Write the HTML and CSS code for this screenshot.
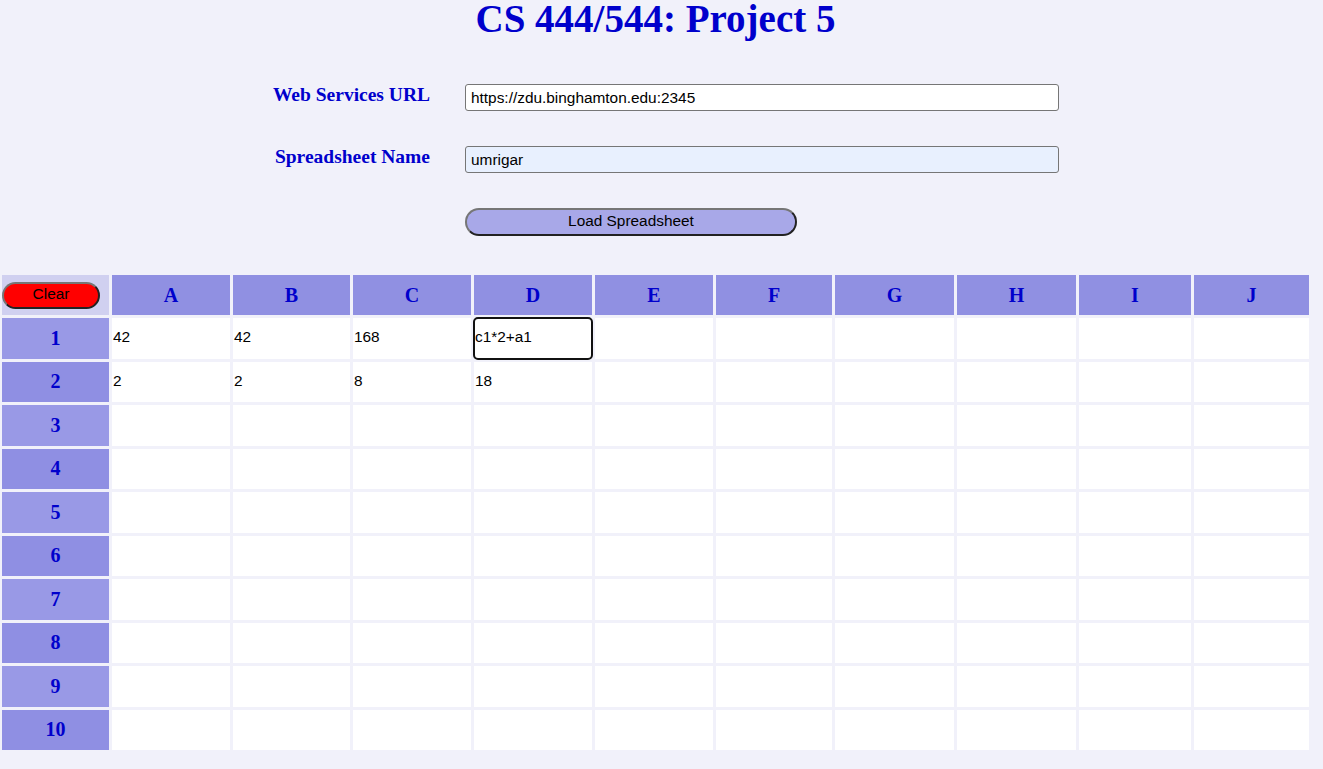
FILE: index.html
```html
<!DOCTYPE html>
<html lang="en">
<head>
<meta charset="utf-8">
<title>CS 444/544: Project 5</title>
<link rel="stylesheet" href="styles.css">
</head>
<body>
<div class="page">
  <h1 class="title">CS 444/544: Project 5</h1>
  <form class="form">
    <label class="label" for="url">Web Services URL</label>
    <input class="field" id="url" value="https://zdu.binghamton.edu:2345">
    <label class="label" for="name">Spreadsheet Name</label>
    <input class="field field-filled" id="name" value="umrigar">
    <span class="spacer"></span>
    <button type="button" class="load">Load Spreadsheet</button>
  </form>
  <div class="sheet">
    <div class="corner"><button type="button" class="clear">Clear</button></div>
    <div class="hdr">A</div><div class="hdr">B</div><div class="hdr">C</div><div class="hdr">D</div><div class="hdr">E</div>
    <div class="hdr">F</div><div class="hdr">G</div><div class="hdr">H</div><div class="hdr">I</div><div class="hdr">J</div>

    <div class="rowhdr odd">1</div>
    <div class="cell">42</div><div class="cell">42</div><div class="cell">168</div><div class="cell focused">c1*2+a1</div>
    <div class="cell"></div><div class="cell"></div><div class="cell"></div><div class="cell"></div><div class="cell"></div><div class="cell"></div>

    <div class="rowhdr even">2</div>
    <div class="cell">2</div><div class="cell">2</div><div class="cell">8</div><div class="cell">18</div>
    <div class="cell"></div><div class="cell"></div><div class="cell"></div><div class="cell"></div><div class="cell"></div><div class="cell"></div>

    <div class="rowhdr odd">3</div>
    <div class="cell"></div><div class="cell"></div><div class="cell"></div><div class="cell"></div><div class="cell"></div>
    <div class="cell"></div><div class="cell"></div><div class="cell"></div><div class="cell"></div><div class="cell"></div>

    <div class="rowhdr even">4</div>
    <div class="cell"></div><div class="cell"></div><div class="cell"></div><div class="cell"></div><div class="cell"></div>
    <div class="cell"></div><div class="cell"></div><div class="cell"></div><div class="cell"></div><div class="cell"></div>

    <div class="rowhdr odd">5</div>
    <div class="cell"></div><div class="cell"></div><div class="cell"></div><div class="cell"></div><div class="cell"></div>
    <div class="cell"></div><div class="cell"></div><div class="cell"></div><div class="cell"></div><div class="cell"></div>

    <div class="rowhdr even">6</div>
    <div class="cell"></div><div class="cell"></div><div class="cell"></div><div class="cell"></div><div class="cell"></div>
    <div class="cell"></div><div class="cell"></div><div class="cell"></div><div class="cell"></div><div class="cell"></div>

    <div class="rowhdr odd">7</div>
    <div class="cell"></div><div class="cell"></div><div class="cell"></div><div class="cell"></div><div class="cell"></div>
    <div class="cell"></div><div class="cell"></div><div class="cell"></div><div class="cell"></div><div class="cell"></div>

    <div class="rowhdr even">8</div>
    <div class="cell"></div><div class="cell"></div><div class="cell"></div><div class="cell"></div><div class="cell"></div>
    <div class="cell"></div><div class="cell"></div><div class="cell"></div><div class="cell"></div><div class="cell"></div>

    <div class="rowhdr odd">9</div>
    <div class="cell"></div><div class="cell"></div><div class="cell"></div><div class="cell"></div><div class="cell"></div>
    <div class="cell"></div><div class="cell"></div><div class="cell"></div><div class="cell"></div><div class="cell"></div>

    <div class="rowhdr even">10</div>
    <div class="cell"></div><div class="cell"></div><div class="cell"></div><div class="cell"></div><div class="cell"></div>
    <div class="cell"></div><div class="cell"></div><div class="cell"></div><div class="cell"></div><div class="cell"></div>
  </div>
</div>
</body>
</html>
```

FILE: styles.css
```css
html, body {
  margin: 0;
  padding: 0;
  background: #f1f1fa;
}

body {
  font-family: "Liberation Sans", Arial, sans-serif;
  color: #000;
}

.page {
  width: 1311px;
}

.title {
  margin: 0;
  font-family: "Liberation Serif", "Times New Roman", serif;
  font-weight: bold;
  font-size: 39px;
  line-height: 37px;
  color: #0000cc;
  text-align: center;
}

.form {
  display: grid;
  grid-template-columns: 430px 594px;
  grid-template-rows: 27px 27px 28px;
  column-gap: 35px;
  row-gap: 35px;
  margin: 47px 0 0 0;
}

.label {
  align-self: start;
  text-align: right;
  font-family: "Liberation Serif", "Times New Roman", serif;
  font-weight: bold;
  font-size: 19.5px;
  line-height: 22px;
  color: #0000cc;
}

.field {
  box-sizing: border-box;
  width: 594px;
  height: 27px;
  margin: 0;
  padding: 0 5px;
  border: 1px solid #767676;
  border-radius: 3px;
  background: #fff;
  font-family: "Liberation Sans", Arial, sans-serif;
  font-size: 15.4px;
  color: #000;
}

.field-filled {
  background: #e8f0fe;
}

.load {
  box-sizing: border-box;
  width: 332px;
  height: 28px;
  margin: 0;
  padding: 0 0 2px;
  border: 2px solid;
  border-color: #767676 #222 #222 #767676;
  border-radius: 14px;
  background: #a8a8e8;
  font-family: "Liberation Sans", Arial, sans-serif;
  font-size: 15.4px;
  color: #000;
}

.sheet {
  display: grid;
  grid-template-columns: 107px 118px 117px 118px 118px 118px 116px 119px 119px 112px 115px;
  grid-template-rows: 40px;
  grid-auto-rows: 40.5px;
  gap: 3px;
  margin: 39px 0 0 2px;
}

.corner {
  background: #d0d0f0;
  display: flex;
  align-items: center;
}

.clear {
  box-sizing: border-box;
  width: 98px;
  height: 27px;
  margin: 0;
  padding: 0 0 2px;
  border: 2px solid;
  border-color: #767676 #222 #222 #767676;
  border-radius: 14px;
  background: #ff0000;
  font-family: "Liberation Sans", Arial, sans-serif;
  font-size: 15.4px;
  color: #000;
}

.hdr,
.rowhdr {
  display: flex;
  align-items: center;
  justify-content: center;
  font-family: "Liberation Serif", "Times New Roman", serif;
  font-weight: bold;
  font-size: 20px;
  color: #0000cc;
}

.hdr {
  background: #9090e2;
}

.rowhdr.odd {
  background: #9999e6;
}

.rowhdr.even {
  background: #8f8fe3;
}

.cell {
  display: flex;
  align-items: center;
  padding: 0 0 2px 1px;
  background: #fff;
  font-family: "Liberation Sans", Arial, sans-serif;
  font-size: 15.4px;
  color: #000;
}

.cell.focused {
  outline: 2px solid #111;
  outline-offset: -1px;
  border-radius: 4px;
}
```
